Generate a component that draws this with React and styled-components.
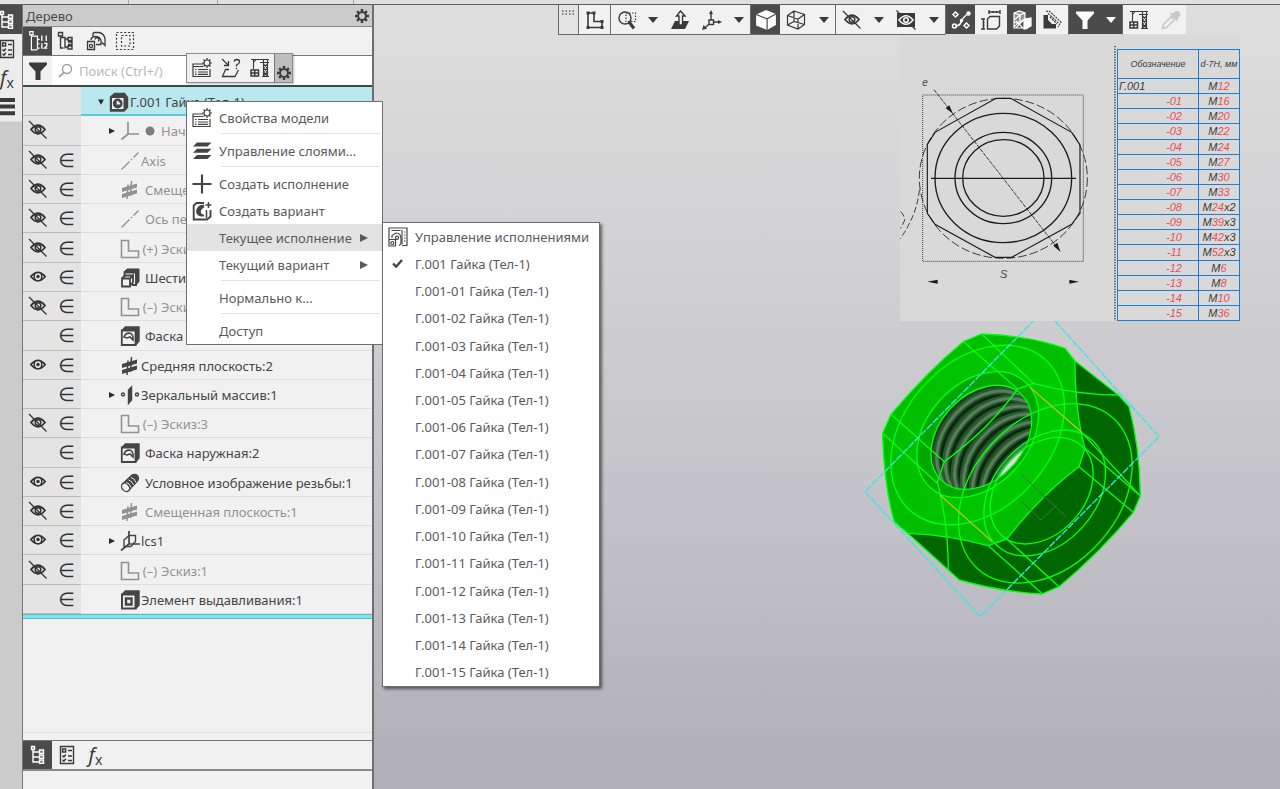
import React from 'react';
import styled, { createGlobalStyle, css } from 'styled-components';

const GlobalStyle = createGlobalStyle`
    *, *::before, *::after {
        box-sizing: border-box;
    }
    body {
        margin: 0;
        font-family: "Noto Sans", "Open Sans", sans-serif;
        font-size: 13px;
        line-height: 18px;
        color: #4a4a4a;
    }
    button, input {
        font: inherit;
        color: inherit;
    }
    ul {
        margin: 0;
        padding: 0;
        list-style: none;
    }
    svg {
        flex: none;
    }
`;

const Page = styled.div`
    position: relative;
    display: flex;
    flex-direction: column;
    min-height: 100vh;
    overflow: hidden;
    background-color: #cbcbcb;
`;

const TopStrip = styled.div`
    display: flex;
    height: 5px;
    background-color: #e0e0e0;
    border-bottom: 1px solid #5c5c5c;
`;

const StripCell = styled.div`
    width: ${(p) => p.$width}px;
    border-right: 1px solid #a8a8a8;
`;

const Workspace = styled.div`
    display: flex;
    flex: 1;
`;

const IconButton = styled.button`
    display: flex;
    flex: none;
    align-items: center;
    justify-content: center;
    width: ${(p) => p.$width || 29}px;
    padding: 0;
    border: 0;
    background-color: ${(p) => (p.$active ? '#4b4b4b' : 'transparent')};
    color: ${(p) => (p.$active ? '#ffffff' : '#3a3a3a')};
    cursor: pointer;
`;

/* left rail */

const Rail = styled.nav`
    flex: none;
    width: 22px;
`;

const RailButtons = styled.div`
    display: flex;
    flex-direction: column;
    background-color: #ececec;
    border-bottom: 1px solid #dcdcdc;
`;

const RailButton = styled(IconButton)`
    width: 22px;
    height: 29px;
    overflow: hidden;
    padding-right: 8px;
`;

/* tree panel */

const Panel = styled.aside`
    display: flex;
    flex: none;
    flex-direction: column;
    width: 352px;
    background-color: #f1f1f1;
    border-left: 1px solid #777777;
    border-right: 2px solid #6e6e73;
`;

const PanelHeader = styled.header`
    display: flex;
    align-items: center;
    justify-content: space-between;
    height: 22px;
    padding-left: 3px;
    background-color: #cbcbcb;
    border-bottom: 1px solid #8a8a8a;
`;

const PanelTitle = styled.h1`
    margin: 0;
    font-size: 13px;
    font-weight: 400;
`;

const PanelTools = styled.div`
    display: flex;
    height: 29px;
    border-bottom: 1px solid #777777;
`;

const SearchRow = styled.div`
    display: flex;
    align-items: stretch;
    height: 31px;
    background-color: #ffffff;
    border-bottom: 2px solid #3c4a4a;
`;

const FilterButton = styled(IconButton)`
    background-color: #f1f1f1;
`;

const SearchLabel = styled.label`
    display: flex;
    flex: 1;
    align-items: center;
    gap: 4px;
    padding-left: 6px;
    color: #9a9a9a;
`;

const SearchInput = styled.input`
    flex: 1;
    min-width: 0;
    border: 0;
    outline: 0;
    background: transparent;
    &::placeholder {
        color: #b8b8b8;
        opacity: 1;
    }
`;

const Tree = styled.ul`
    display: grid;
    grid-auto-rows: 1fr;
    min-height: 527px;
`;

const RowStatus = styled.div`
    display: flex;
    flex: none;
    width: 58px;
    background-color: #e4e4e4;
    border-bottom: 1px solid #bcbcbc;
`;

const RowBody = styled.div`
    display: flex;
    flex: 1;
    align-items: center;
    min-width: 0;
    padding-left: ${(p) => (p.$root ? 12 : 23)}px;
    padding-top: 2px;
    border-bottom: 1px solid #dedede;
    ${(p) => p.$root && css`
        background-color: #b9e8ee;
        border-bottom: 2px solid #5ccadb;
    `}
`;

const TreeRow = styled.li`
    display: flex;
    min-width: 0;
    color: ${(p) => (p.$dim ? '#929292' : '#454545')};
    white-space: nowrap;
`;

const StatusSlot = styled.span`
    display: flex;
    align-items: center;
    justify-content: center;
    width: 29px;
    color: #333333;
`;

const Membership = styled.span`
    font-family: "DejaVu Sans", sans-serif;
    font-size: 19px;
`;

const ExpandSlot = styled.span`
    display: flex;
    justify-content: center;
    width: 16px;
    color: #2b2b2b;
`;

const RowIcon = styled.span`
    display: flex;
    width: 20px;
    justify-content: center;
`;

const RowMark = styled.span`
    display: flex;
    align-items: center;
    justify-content: center;
    width: 20px;
`;

const RowLabel = styled.span`
    padding-left: ${(p) => (p.$tight ? 1 : 5)}px;
`;

const TreeEnd = styled.div`
    height: 5px;
    background-color: #86e3ec;
    border-top: 1px solid #57bccb;
    border-bottom: 1px solid #57bccb;
`;

const PanelSpace = styled.div`
    flex: 1;
    border-bottom: 1px solid #dddddd;
`;

const PanelTabs = styled.div`
    display: flex;
    height: 31px;
    margin-top: 7px;
    margin-bottom: 18px;
    border-top: 1px solid #777777;
    border-bottom: 2px solid #8a8a8a;
`;

const Fx = styled.span`
    font-size: 20px;
    font-style: italic;
    line-height: 22px;
    sub {
        font-size: 14px;
        font-style: normal;
        line-height: 0;
        vertical-align: -3px;
    }
`;

/* model viewport */

const Viewport = styled.main`
    display: flex;
    flex: 1;
    flex-direction: column;
    align-items: flex-end;
    min-width: 0;
    background: linear-gradient(#dedede 0%, #d2d2d4 30%, #c3c2c8 65%, #b0afb9 100%);
`;

const ViewToolbar = styled.div`
    display: flex;
    align-self: stretch;
    height: 30px;
    padding-left: 184px;
`;

const ToolGroup = styled.div`
    display: flex;
    background-color: #f1f1f1;
    border-left: 1px solid #6a6a6a;
    border-bottom: 1px solid ${(p) => (p.$open ? 'transparent' : '#6a6a6a')};
    background-clip: padding-box;
`;

const GripButton = styled(IconButton)`
    align-items: flex-start;
    padding-top: 5px;
    background-color: #e4e4e4;
`;

const Sheet = styled.section`
    display: flex;
    margin-right: 40px;
    background-color: #d9d9d9;
`;

const SizeTable = styled.table`
    width: 123px;
    margin-top: 14px;
    border-collapse: collapse;
    table-layout: fixed;
    font-family: "Liberation Sans Narrow", "Liberation Sans", sans-serif;
    font-size: 11px;
    font-style: italic;
    line-height: 12px;
    color: #3c3c3c;
    th, td {
        height: 15px;
        padding: 0 1px;
        border: 1px solid #1b7fd8;
        font-weight: 400;
        text-align: center;
        white-space: nowrap;
    }
    thead th {
        height: 29px;
        padding: 0;
        font-size: 9px;
    }
`;

const CodeCell = styled.th`
    && {
        padding-right: ${(p) => (p.$variant ? 16 : 1)}px;
        text-align: ${(p) => (p.$variant ? 'right' : 'left')};
        color: ${(p) => (p.$variant ? '#e5505a' : '#3c3c3c')};
    }
`;

const CodeColumn = styled.col`
    width: 81px;
`;

const Accent = styled.span`
    color: #e5505a;
`;

const Model = styled.div`
    display: flex;
    margin-right: 110px;
`;

/* popups over the tree */

const MiniBar = styled.div`
    position: absolute;
    top: 53px;
    left: 186px;
    display: flex;
    height: 30px;
    background-color: #f1f1f1;
    border: 1px solid #8c8c8c;
    box-shadow: 1px 1px 2px rgba(0, 0, 0, 0.25);
`;

const MoreButton = styled(IconButton)`
    align-items: flex-end;
    padding-bottom: 2px;
    background-color: #bdbdbd;
    border-left: 1px solid #777777;
`;

const Menu = styled.ul`
    position: absolute;
    background-color: #ffffff;
    border: 1px solid #6f6f6f;
    box-shadow: 2px 2px 3px rgba(0, 0, 0, 0.55);
`;

const ContextMenu = styled(Menu)`
    top: 101px;
    left: 186px;
    width: 197px;
    padding-top: 2px;
    box-shadow: none;
`;

const SubMenu = styled(Menu)`
    top: -2px;
    left: 100%;
    display: grid;
    grid-auto-rows: 1fr;
    width: 218px;
    min-height: 465px;
`;

const MenuItem = styled.li`
    position: relative;
    height: 27px;
    background-color: ${(p) => (p.$open ? '#e3e3e3' : 'transparent')};
`;

const SubItem = styled.li`
    display: flex;
`;

const MenuButton = styled.button`
    display: flex;
    align-items: center;
    width: 100%;
    height: 100%;
    padding: 0 14px 0 0;
    border: 0;
    background: transparent;
    color: #5a5a5a;
    text-align: left;
    white-space: nowrap;
`;

const MenuIcon = styled.span`
    display: flex;
    flex: none;
    justify-content: center;
    width: 32px;
    padding-right: 3px;
    color: #444444;
`;

const MenuText = styled.span`
    flex: 1;
`;

const Separator = styled.li`
    height: 1px;
    margin: 2px 2px 3px 34px;
    background-color: #e2e2e2;
`;

const Svg = ({ size = 20, children, sw = 1.4 }) => (
    <svg width={size} height={size} viewBox="0 0 20 20" fill="none" stroke="currentColor" strokeWidth={sw} aria-hidden="true">
        {children}
    </svg>
);

const Gear = ({ size = 14 }) => (
    <Svg size={size} sw={2.6}>
        <circle cx="10" cy="10" r="5.6" />
        <path strokeWidth="3.6" d="M10 0v4M10 16v4M0 10h4M16 10h4M3 3l2.800 2.800M14.200 14.200L17 17M3 17l2.800-2.800M14.200 5.800L17 3" />
    </Svg>
);

const TreeIcon = () => (
    <Svg>
        <path d="M5 4v13h9M5 7h8M5 12h8" />
        <path d="M3.5 1.5h3v3h-3zM11.5 5h4v3.4h-4zM11.5 10h4v3.4h-4zM11.5 15h4v3.4h-4z" fill="#777" />
    </Svg>
);

const ListIcon = () => (
    <Svg>
        <path d="M3.5 1.5h13v17h-13z" />
        <path d="M5.6 4h3v3h-3zM11 5.5h4M5.5 10.5l1.4 1.4 2-2.4M11 11h4M5.5 14.8l1.4 1.4 2-2.4M11 15.5h4" strokeWidth="1.5" />
    </Svg>
);

const BarsIcon = () => (
    <Svg sw={4}>
        <path d="M0 3h18M0 9.6h18M0 16.2h18" />
    </Svg>
);

const NumberedTree = () => (
    <Svg size={22} sw={1.1}>
        <path d="M4 4v14h5M4 5.500h5.500v12.500M9.5 8.500h2M9.500 12.500h2M9.5 16.500h2" />
        <path d="M2.5 1.5h3v3h-3z" />
        <path d="M13.5 5v5M17.500 5v5M13.500 12v5M15.500 12.200h2.500v2l-2.200 2.300h2.700" strokeWidth="1.200" />
    </Svg>
);

const BranchTree = () => (
    <Svg size={20}>
        <path d="M3.500 5v12h3M3.500 6.500H8v11M8 8h3M8 16h3" />
        <path d="M1.500 1.500h4v3.500h-4zM11 6.500h4v3h-4zM11 11h4v2.500h-4M11 15h4v3h-4z" />
    </Svg>
);

const StackIcon = () => (
    <Svg size={20} sw={1.3}>
        <path d="M7 6V3q0-1.500 2-1.500h4q5 1 6 6v7l-3-3M5 9q0-3 4-3.500 5 0 6 4v4h-5" />
        <path d="M9 8.500a2 2 0 1 1 3 2" />
        <path d="M1.500 10.500h7v8h-7z" />
        <circle cx="5" cy="15" r="1.600" />
    </Svg>
);

const SelectIcon = () => (
    <Svg size={20} sw={1.2}>
        <path d="M1.500 1.500h17v17h-17zM6.500 4.500h8.500v10.500H6.500z" strokeDasharray="2 1.800" />
    </Svg>
);

const Funnel = ({ size = 20 }) => (
    <Svg size={size}>
        <path d="M1 1.500h18v2l-6.500 7v8.500h-5v-8.500L1 3.500z" fill="currentColor" stroke="none" />
    </Svg>
);

const SearchIcon = () => (
    <Svg size={15} sw={1.8}>
        <circle cx="12" cy="8" r="6" />
        <path d="M8 12.500l-6.500 6" strokeWidth="2.400" />
    </Svg>
);

const Eye = () => (
    <Svg size={18} sw={1.9}>
        <path d="M2 9.500q8-9.500 16 0-8 9.500-16 0z" />
        <path d="M7 5.500q-2.500 4 0 8M13 5.500q2.500 4 0 8" strokeWidth="1.600" />
        <circle cx="10" cy="9.500" r="1.900" fill="currentColor" stroke="none" />
    </Svg>
);

const EyeOff = () => (
    <Svg size={20} sw={1.8}>
        <path d="M3 9.500q7-8.500 14 0-7 8.500-14 0z" />
        <circle cx="10" cy="9.500" r="2.800" strokeWidth="1.500" />
        <path d="M1 1l17.500 17.500" strokeWidth="1.300" />
    </Svg>
);

const Caret = () => (
    <svg width="10" height="6" viewBox="0 0 10 6" aria-hidden="true"><path d="M0 0h10L5 6z" fill="currentColor" /></svg>
);

const Arrow = ({ size = 6 }) => (
    <svg width={size} height={size} viewBox="0 0 8 8" aria-hidden="true"><path d="M0 0l8 4-8 4z" fill="currentColor" /></svg>
);

const ArrowDown = () => (
    <svg width="6" height="6" viewBox="0 0 8 7" aria-hidden="true"><path d="M0 0h8L4 7z" fill="currentColor" /></svg>
);

const PartIcon = () => (
    <Svg>
        <path d="M1.500 5l4-3.500h10l3 4v10l-3.500 3.500h-13.500z" fill="currentColor" />
        <path d="M3 6h11.500v11H3z" fill="#e8f6f8" stroke="none" />
        <circle cx="8.700" cy="11.500" r="4.200" fill="currentColor" />
        <path d="M8.700 9v2.500h2.500" stroke="#e8f6f8" strokeWidth="2" />
    </Svg>
);

const OriginIcon = () => (
    <Svg><path d="M8 1v12h11M8 13l-6.500 5.500" strokeWidth="1.700" /></Svg>
);

const DotMark = () => (
    <svg width="10" height="10" aria-hidden="true"><circle cx="5" cy="5" r="4.500" fill="#7d7d7d" /></svg>
);

const AxisIcon = () => (
    <Svg><path d="M1.500 18.500l8-8M11 9l1-1M13.500 6.500l5-5" /></Svg>
);

const PlaneIcon = () => (
    <Svg>
        <path d="M2 8l15-4.500v4L2 12zM2 14l15-4.500v4L2 18z" fill="currentColor" stroke="none" />
        <path d="M7 19l1-14.500M10.500 16l1-15" strokeWidth="1.500" />
    </Svg>
);

const SketchIcon = () => (
    <Svg><path d="M1.500 1.500h7v10.500h10v6.500h-17z" strokeWidth="1.600" /></Svg>
);

const HexIcon = () => (
    <Svg sw={1.8}>
        <path d="M4 4l3-3h12v12.500L16 17V4z" fill="currentColor" strokeWidth="1" />
        <path d="M4.500 9V4.500h11.500v12.500h-4" />
        <path d="M2 10.500h8V18.500H2zM10 10.500l3-3v7l-3 3M2 10.500L5 7.500h8" />
    </Svg>
);

const ChamferIcon = () => (
    <Svg>
        <path d="M2 4.500L5.500 1H19v14l-3.500 4" fill="currentColor" />
        <path d="M1.800 4.500h13.700V19H1.800z" fill="#f1f1f1" strokeWidth="1.800" />
        <path d="M4 11q2-5 7-3.500 2.500 2 2 6.500l-3-3-3 1z" strokeWidth="1.600" />
    </Svg>
);

const MirrorIcon = () => (
    <Svg>
        <path d="M8.500 5L11.500 2v13l-3 3.500z" fill="currentColor" />
        <circle cx="3" cy="9.500" r="1.500" />
        <circle cx="17" cy="9.500" r="1.500" />
    </Svg>
);

const ThreadIcon = () => (
    <Svg>
        <path d="M2.500 11L12 2q5-2 6.500 3 0 2-1.500 3.500L9 17z" fill="currentColor" />
        <ellipse cx="5.600" cy="14.300" rx="4.600" ry="3.600" transform="rotate(50 5.600 14.300)" fill="#f1f1f1" />
        <path d="M6 9.500q4 .5 5 5M8.500 7q4 1 5 5M11 4.500q4 1 5 5" stroke="#f1f1f1" strokeWidth=".9" />
    </Svg>
);

const LcsIcon = () => (
    <Svg>
        <path d="M9 0v13h11M9 13l-8 6.500" strokeWidth="1.700" />
        <path d="M4 15V9l5-4.500h6.500v6L11 15.500H4z" />
    </Svg>
);

const ExtrudeIcon = () => (
    <Svg>
        <path d="M2 4.500L5.500 1H19v14l-3.500 4" fill="currentColor" />
        <path d="M2 4.500h13.500V18.500H2z" fill="#f1f1f1" strokeWidth="2" />
        <path d="M6 8.500h5.500v6H6z" strokeWidth="2.400" />
    </Svg>
);

const PropertiesIcon = () => (
    <Svg sw={1.2}>
        <path d="M11 6H1v12.500h17V11M1 8.500h10M3 11.500h1.500M6 11.500h10M3 14h1.500M6 14h10M3 16.300h1.500M6 16.300h10" />
        <circle cx="15" cy="5" r="3" />
        <path d="M15 0v2M15 8v2M10 5h2M18 5h2M11.500 1.500L13 3M17 7l1.500 1.500M11.500 8.500L13 7M17 3l1.500-1.500" />
    </Svg>
);

const QueryIcon = () => (
    <Svg sw={1.3}>
        <path d="M1 1l6.500 6.500M7.500 3v4.500H3M4.500 11.500L1.500 18.500h12.500l3.500-6.500M4 11.500h4" />
        <path d="M13 3.500q.5-2 3-2t2.500 2.500q0 1.500-3 3v1.500M15.500 9.800v1.500" />
    </Svg>
);

const CraneIcon = () => (
    <Svg sw={1.1}>
        <path d="M1 1.500h18M3.500 2v9M10 4.500h9M3.500 4.500L6 1.500" />
        <path d="M13.500 2v16.500M17.500 2v16.500M12 18.500h7M13.500 6l4 4-4 4 4 4M17.500 6l-4 4 4 4-4 4" />
        <path d="M1 12h7.500v6H1zM1 15h7.500M4.700 12v6" strokeWidth="1.500" />
    </Svg>
);

const LayersIcon = () => (
    <Svg>
        <path d="M5 1.500h14.500l-4 4H1zM5 7.700h14.500l-4 4H1zM5 14h14.500l-4 4H1z" fill="currentColor" stroke="none" />
    </Svg>
);

const PlusIcon = () => (
    <Svg sw={2.2}><path d="M10 .5v19M.5 10h19" /></Svg>
);

const VariantIcon = () => (
    <Svg>
        <path d="M12 2H4.500L1.700 4.500v14H15l3.500-3V9" strokeWidth="1.900" />
        <path d="M11.500 4.500L8 5Q4 8 5 12q2.500 4 7 2.500-3.500-.5-4-3.500 0-3 3.500-5z" fill="currentColor" />
        <path d="M14.500 9v8M16.500 1v6M13.500 4h6" strokeWidth="1.500" />
    </Svg>
);

const ConfigIcon = () => (
    <Svg sw={1.2}>
        <path d="M1 12V1h18v17.500h-5M3.500 3.500h9M14 3v14M16 5h1.500M16 8h1.500M16 11h1.500M16 14h1.500" />
        <path d="M4 11V8.500l4-2.500q5 0 5 6v5l-2 1.500M1 12.500h6.500v6.500H1z" />
        <circle cx="4.300" cy="16" r="1.500" />
        <circle cx="9" cy="10.800" r="1.600" />
    </Svg>
);

const CheckIcon = () => (
    <svg width="11" height="9" viewBox="0 0 12 10" aria-hidden="true"><path d="M1 5l3.500 3.500L11 1" fill="none" stroke="currentColor" strokeWidth="2.600" /></svg>
);

const GripIcon = () => (
    <svg width="13" height="6" aria-hidden="true">
        <path d="M0 1h13M0 4h13" stroke="#666" strokeWidth="1.500" strokeDasharray="1.500 2" />
    </svg>
);

const NodeSketchIcon = () => (
    <Svg sw={1.6}>
        <path d="M3 3h6v8.500h8v6H3z" />
        <path d="M1.500 1.500h3v3h-3zM7.500 1.500h3v3h-3zM15.500 10h3v3h-3zM1.500 16h3v3h-3zM15.500 16h3v3h-3z" fill="currentColor" stroke="none" />
    </Svg>
);

const ZoomAreaIcon = () => (
    <Svg>
        <circle cx="8" cy="8" r="6" />
        <path d="M12 12l5 6.500" strokeWidth="3" />
        <path d="M9 3h9.500v8.500H9z" strokeDasharray="1.500 1.500" strokeWidth="1.200" />
    </Svg>
);

const RaiseIcon = () => (
    <Svg>
        <path d="M5 11h14l-4 8H1z" fill="currentColor" stroke="none" />
        <path d="M10.500 1L6.500 6H9v9h3.500V6h2.500z" fill="#f1f1f1" />
    </Svg>
);

const TriadIcon = () => (
    <Svg>
        <path d="M9 3v7M12 12h5M7 14l-4 4M7 10h4.500v4.500H7z" />
        <path d="M9 0l2 4H7zM20 12l-4 2v-4zM0 20l1.500-5 3.500 3.500z" fill="currentColor" stroke="none" />
    </Svg>
);

const CubeIcon = () => (
    <Svg size={22}>
        <path d="M10 1l9 3.500v10L11 19 1 15V5z" fill="currentColor" stroke="none" />
        <path d="M1 5l10 4 8-4.500M11 9v10" stroke="#4b4b4b" strokeWidth="1.100" />
    </Svg>
);

const WireCubeIcon = () => (
    <Svg sw={1.2}>
        <path d="M8 1l10.500 3.500v10L12 19 1.500 15V5.500zM1.500 5.500L12 9l6.500-4.500M12 9v10M8 1v10.500M1.500 15L8 11.500l10.500 3" />
    </Svg>
);

const EyeBoxIcon = () => (
    <Svg>
        <path d="M1 3h18v14H1z" fill="currentColor" stroke="none" />
        <path d="M3 10q7-8.500 14 0-7 8.500-14 0z" stroke="#f1f1f1" strokeWidth="1.600" />
        <circle cx="10" cy="10" r="2.300" stroke="#f1f1f1" strokeWidth="1.600" />
        <path d="M.5 .5L4 4M16 16l3.500 3.500" />
    </Svg>
);

const ConstraintIcon = () => (
    <Svg sw={1.5}>
        <path d="M4 16q5 0 6-4t8-9" />
        <path d="M4.500 2l2.500 2.500L4.500 7 2 4.500zM15.500 13l2.500 2.500-2.500 2.500-2.500-2.500z" />
        <circle cx="3.500" cy="16" r="2" />
        <circle cx="17.500" cy="3.500" r="1.500" />
        <circle cx="10.500" cy="10.500" r="1" />
    </Svg>
);

const DimensionIcon = () => (
    <Svg sw={1.4}>
        <path d="M6.500 9L9 6.500h9.500v9.500L15.500 19H6.500zM8 0v4M19 0v4M8 2h11M12 1v2M15.500 1v2M0 9h4M0 19h4M2.500 9v10M1.500 12.500h2M1.500 15.500h2" />
    </Svg>
);

const PrismIcon = () => (
    <Svg sw={1.2}>
        <path d="M2 3l5-2 6 2v6l-6 5-5-2z" fill="currentColor" fillOpacity=".4" />
        <path d="M2 3l6 2v6l-6 6M8 5l5-2M2 10l6-5M2 12v6h10M4 18l7-8M4 11l7 7M8 11h3" />
        <path d="M12 9l7-1v8l-5 3h-2z" fill="currentColor" />
    </Svg>
);

const CornerIcon = () => (
    <Svg>
        <path d="M4 1.500l3-.5 12 11-3 5M6 3.500l11 10M8 7l7 7" strokeWidth="1.200" strokeDasharray="2 1" />
        <path d="M1.500 5v13.500h12.500v-4.500h-4L6 10V5z" fill="currentColor" stroke="none" />
    </Svg>
);

const DropperIcon = () => (
    <Svg sw={1.6}>
        <path d="M1.500 18.500l1-4 8-8 3 3-8 8z" />
        <path d="M10 4l6 6 .5-2.500 2-2.500q.5-3-3-3.500l-2.500 2z" fill="currentColor" />
    </Svg>
);

const FxIcon = () => <Fx>f<sub>x</sub></Fx>;

const rows = [
    { label: 'Начало', icon: <OriginIcon />, mark: <DotMark />, eye: 'off', dim: true, arrow: true, free: true, tight: true },
    { label: 'Axis', icon: <AxisIcon />, eye: 'off', dim: true, tight: true },
    { label: 'Смещенная', icon: <PlaneIcon />, eye: 'off', dim: true },
    { label: 'Ось первая', icon: <AxisIcon />, eye: 'off', dim: true },
    { label: 'Эскиз:4', icon: <SketchIcon />, mark: '(+)', eye: 'off', dim: true, tight: true },
    { label: 'Шестигран', icon: <HexIcon />, eye: 'on' },
    { label: 'Эскиз:2', icon: <SketchIcon />, mark: '(–)', eye: 'off', dim: true, tight: true },
    { label: 'Фаска наружная:1', icon: <ChamferIcon /> },
    { label: 'Средняя плоскость:2', icon: <PlaneIcon />, eye: 'on', tight: true },
    { label: 'Зеркальный массив:1', icon: <MirrorIcon />, arrow: true, tight: true },
    { label: 'Эскиз:3', icon: <SketchIcon />, mark: '(–)', eye: 'off', dim: true, tight: true },
    { label: 'Фаска наружная:2', icon: <ChamferIcon /> },
    { label: 'Условное изображение резьбы:1', icon: <ThreadIcon />, eye: 'on' },
    { label: 'Смещенная плоскость:1', icon: <PlaneIcon />, eye: 'off', dim: true },
    { label: 'lcs1', icon: <LcsIcon />, eye: 'on', arrow: true, tight: true },
    { label: 'Эскиз:1', icon: <SketchIcon />, mark: '(–)', eye: 'off', dim: true, tight: true },
    { label: 'Элемент выдавливания:1', icon: <ExtrudeIcon />, tight: true },
];

// [value, suffix] for each execution, starting from the base one
const sizes = [
    ['12'], ['16'], ['20'], ['22'], ['24'], ['27'], ['30'], ['33'],
    ['24', 'x2'], ['39', 'x3'], ['42', 'x3'], ['52', 'x3'], ['6'], ['8'], ['10'], ['36'],
];

const suffix = (i) => (i === 0 ? '' : `-${String(i).padStart(2, '0')}`);

const ModelTree = () => (
    <Tree>
        <TreeRow>
            <RowStatus />
            <RowBody $root>
                <ExpandSlot><ArrowDown /></ExpandSlot>
                <RowIcon><PartIcon /></RowIcon>
                <RowLabel $tight>Г.001 Гайка (Тел-1)</RowLabel>
            </RowBody>
        </TreeRow>
        {rows.map((row) => (
            <TreeRow key={row.label} $dim={row.dim}>
                <RowStatus>
                    <StatusSlot>
                        {row.eye === 'on' && <Eye />}
                        {row.eye === 'off' && <EyeOff />}
                    </StatusSlot>
                    <StatusSlot>{!row.free && <Membership>∈</Membership>}</StatusSlot>
                </RowStatus>
                <RowBody>
                    <ExpandSlot>{row.arrow && <Arrow />}</ExpandSlot>
                    <RowIcon>{row.icon}</RowIcon>
                    {row.mark && <RowMark>{row.mark}</RowMark>}
                    <RowLabel $tight={row.tight}>{row.label}</RowLabel>
                </RowBody>
            </TreeRow>
        ))}
    </Tree>
);

const Executions = () => (
    <SubMenu>
        <SubItem>
            <MenuButton>
                <MenuIcon><ConfigIcon /></MenuIcon>
                <MenuText>Управление исполнениями</MenuText>
            </MenuButton>
        </SubItem>
        {sizes.map((size, i) => (
            <SubItem key={suffix(i)}>
                <MenuButton>
                    <MenuIcon>{i === 0 && <CheckIcon />}</MenuIcon>
                    <MenuText>{`Г.001${suffix(i)} Гайка (Тел-1)`}</MenuText>
                </MenuButton>
            </SubItem>
        ))}
    </SubMenu>
);

const Item = ({ icon, text, arrow, open, children }) => (
    <MenuItem $open={open}>
        <MenuButton>
            <MenuIcon>{icon}</MenuIcon>
            <MenuText>{text}</MenuText>
            {arrow && <Arrow size={8} />}
        </MenuButton>
        {children}
    </MenuItem>
);

const TreeContextMenu = () => (
    <ContextMenu>
        <Item icon={<PropertiesIcon />} text="Свойства модели" />
        <Separator />
        <Item icon={<LayersIcon />} text="Управление слоями..." />
        <Separator />
        <Item icon={<PlusIcon />} text="Создать исполнение" />
        <Item icon={<VariantIcon />} text="Создать вариант" />
        <Item text="Текущее исполнение" arrow open>
            <Executions />
        </Item>
        <Item text="Текущий вариант" arrow />
        <Separator />
        <Item text="Нормально к..." />
        <Separator />
        <Item text="Доступ" />
    </ContextMenu>
);

const Faded = styled.span`
    display: flex;
    color: #c9c9c9;
`;

const Toolbar = () => (
    <ViewToolbar>
        <ToolGroup><GripButton $width={19} aria-label="Панель"><GripIcon /></GripButton></ToolGroup>
        <ToolGroup><IconButton $width={31} aria-label="Эскиз"><NodeSketchIcon /></IconButton></ToolGroup>
        <ToolGroup>
            <IconButton $width={31} aria-label="Масштаб"><ZoomAreaIcon /></IconButton>
            <IconButton $width={22} aria-label="Варианты масштаба"><Caret /></IconButton>
            <IconButton $width={32} aria-label="Нормально к"><RaiseIcon /></IconButton>
            <IconButton $width={31} aria-label="Ориентация"><TriadIcon /></IconButton>
            <IconButton $width={23} aria-label="Варианты ориентации"><Caret /></IconButton>
        </ToolGroup>
        <ToolGroup>
            <IconButton $active aria-label="Полутоновое"><CubeIcon /></IconButton>
            <IconButton $width={32} aria-label="Каркас"><WireCubeIcon /></IconButton>
            <IconButton $width={23} aria-label="Варианты каркаса"><Caret /></IconButton>
        </ToolGroup>
        <ToolGroup>
            <IconButton $width={32} aria-label="Скрыть"><EyeOff /></IconButton>
            <IconButton $width={22} aria-label="Варианты скрытия"><Caret /></IconButton>
            <IconButton $width={32} aria-label="Скрыть фон"><EyeBoxIcon /></IconButton>
            <IconButton $width={23} aria-label="Варианты фона"><Caret /></IconButton>
        </ToolGroup>
        <ToolGroup $open>
            <IconButton $active aria-label="Ограничения"><ConstraintIcon /></IconButton>
            <IconButton $width={32} aria-label="Размеры"><DimensionIcon /></IconButton>
            <IconButton $active aria-label="Сечение"><PrismIcon /></IconButton>
            <IconButton $width={32} aria-label="Угол"><CornerIcon /></IconButton>
        </ToolGroup>
        <ToolGroup $open>
            <IconButton $active $width={31} aria-label="Фильтр"><Funnel /></IconButton>
            <IconButton $active $width={22} aria-label="Варианты фильтра"><Caret /></IconButton>
        </ToolGroup>
        <ToolGroup $open>
            <IconButton $width={32} aria-label="Сборка"><CraneIcon /></IconButton>
            <IconButton $width={31} disabled aria-label="Пипетка"><Faded><DropperIcon /></Faded></IconButton>
        </ToolGroup>
    </ViewToolbar>
);

const Drawing = () => (
    <svg width="217" height="286" viewBox="15 0 651 858" fill="none" stroke="#1c1c1c" strokeWidth="3.500">
        <path d="M83 180H565V679H83z" strokeWidth="2.500" strokeDasharray="3 3" />
        <path d="M660 33V858" strokeWidth="3.500" strokeDasharray="4 4" />
        <ellipse cx="325" cy="430" rx="252" ry="240" strokeWidth="2.500" strokeDasharray="26 9" />
        <path d="M303 190h44L530 292l25 38v205l-25 33L350 667h-50L120 568 97 535V328l23-36z" />
        <ellipse cx="325" cy="429" rx="205" ry="194" strokeWidth="4" />
        <ellipse cx="325" cy="429" rx="145" ry="137" strokeWidth="4" />
        <ellipse cx="325" cy="429" rx="122" ry="115" strokeWidth="4" />
        <path d="M108 430H543" />
        <path d="M117 164L496 650" strokeWidth="2.500" strokeDasharray="12 3" />
        <path d="M73 465Q66 540 15 612M17 530q10 8 12 26l-12 24" strokeWidth="2.500" strokeDasharray="18 8" />
        <g fill="#1c1c1c" stroke="none">
            <path d="M174 236l-22-16 11-9zM496 650l-21-18 12-9zM97 740l31-6v12zM552 740l-29-6v12z" />
            <g fontFamily="Liberation Sans, sans-serif" fontStyle="italic" fill="#444">
                <text x="82" y="153" fontSize="30">e</text>
                <text x="315" y="728" fontSize="33">S</text>
            </g>
        </g>
    </svg>
);

const tilt = (x, y) => `translate(${x} ${y}) rotate(-48)`;

const Nut = () => (
    <svg width="315" height="304" viewBox="0 18 945 912" fill="none" strokeLinejoin="round">
        <defs>
            <clipPath id="hole"><ellipse rx="176" ry="127" transform={tilt(379, 367)} /></clipPath>
            <linearGradient id="face" x1="0" y1="0" x2="1" y2="1">
                <stop offset="0" stopColor="#00bd00" />
                <stop offset="1" stopColor="#00cc00" />
            </linearGradient>
        </defs>
        <path
            d="M380 57C470 60 560 75 630 100L660 138 790 240 822 275C845 360 855 450 856 543L835 592C770 670 690 750 612 815L560 837C470 832 390 817 313 795L280 765 158 655 118 620C95 540 85 450 83 355L108 298C170 225 240 150 325 80z"
            fill="#006600"
        />
        <path
            d="M380 57C470 60 560 75 630 100L660 138C660 250 670 330 690 400L672 455C590 515 520 590 455 672L400 692C320 670 240 658 158 655L118 620C95 540 85 450 83 355L108 298C170 225 240 150 325 80z"
            fill="#00bd00"
        />
        <ellipse rx="304" ry="219" transform={tilt(368, 360)} fill="url(#face)" />
        <ellipse rx="213" ry="153" transform={tilt(368, 359)} fill="#00a800" />
        <g clipPath="url(#hole)">
            <path d="M200 190H560V550H200z" fill="#123a16" />
            {[0, 1, 2, 3, 4, 5, 6].map((i) => (
                <g key={i} transform={tilt(392 + i * 27, 380 + i * 23)}>
                    <ellipse rx="176" ry="127" fill="#1a451d" />
                    <ellipse rx="174" ry="125" stroke="#2c5a30" strokeWidth="20" />
                    <ellipse rx="172" ry="123" stroke="#587f5b" strokeWidth="9" />
                    <ellipse rx="157" ry="108" stroke="#0b250e" strokeWidth="7" />
                </g>
            ))}
            <ellipse rx="180" ry="130" transform={tilt(560, 527)} fill="#dcdce0" />
        </g>
        <g stroke="#00ff10" strokeWidth="4">
            <path d="M380 57C470 60 560 75 630 100L660 138 790 240 822 275C845 360 855 450 856 543L835 592C770 670 690 750 612 815L560 837C470 832 390 817 313 795L280 765 158 655 118 620C95 540 85 450 83 355L108 298C170 225 240 150 325 80z" />
            <path d="M660 138C660 250 670 330 690 400L672 455C590 515 520 590 455 672L400 692C320 670 240 658 158 655" />
            <ellipse rx="304" ry="219" transform={tilt(368, 360)} />
            <ellipse rx="213" ry="153" transform={tilt(368, 359)} />
            <ellipse rx="176" ry="127" transform={tilt(379, 367)} />
            <ellipse rx="304" ry="219" transform={tilt(571, 535)} />
            <ellipse rx="213" ry="153" transform={tilt(569, 534)} />
            <ellipse rx="180" ry="130" transform={tilt(560, 527)} />
            <path d="M325 80L488 222 535 205C620 228 700 240 790 240M380 57L535 205M488 222C425 310 350 380 268 440L108 298M268 440L247 500C270 590 280 680 280 765M83 355L247 505" />
            <path d="M680 352L856 543M690 400L856 543M672 455L835 592M455 672L612 815M400 692L560 835" />
        </g>
        <path d="M525 217L680 352M255 540L412 680" stroke="#b9c414" strokeWidth="4" />
        <path d="M600 18L912 365 375 905 30 530 535 18" stroke="#3fe3e6" strokeWidth="4" strokeDasharray="22 4" />
        <path d="M500 480L635 607M500 560L558 615 605 570" stroke="#4d6b4d" strokeWidth="3" />
    </svg>
);

const ExecutionTable = () => (
    <SizeTable>
        <colgroup>
            <CodeColumn />
            <col />
        </colgroup>
        <thead>
            <tr>
                <th scope="col">Обозначение</th>
                <th scope="col">d-7H, мм</th>
            </tr>
        </thead>
        <tbody>
            {sizes.map(([value, pitch], i) => (
                <tr key={suffix(i)}>
                    <CodeCell scope="row" $variant={i > 0}>{i === 0 ? 'Г.001' : suffix(i)}</CodeCell>
                    <td>М<Accent>{value}</Accent>{pitch}</td>
                </tr>
            ))}
        </tbody>
    </SizeTable>
);

const App = () => (
    <React.Fragment>
        <GlobalStyle />
        <Page>
            <TopStrip>
                <StripCell $width={129} />
                <StripCell $width={89} />
                <StripCell $width={136} />
            </TopStrip>
            <Workspace>
                <Rail>
                    <RailButtons>
                        <RailButton $active aria-label="Дерево"><TreeIcon /></RailButton>
                        <RailButton aria-label="Параметры"><ListIcon /></RailButton>
                        <RailButton aria-label="Переменные"><FxIcon /></RailButton>
                        <RailButton aria-label="Слои"><BarsIcon /></RailButton>
                    </RailButtons>
                </Rail>
                <Panel>
                    <PanelHeader>
                        <PanelTitle>Дерево</PanelTitle>
                        <IconButton $width={20} aria-label="Настройка"><Gear /></IconButton>
                    </PanelHeader>
                    <PanelTools>
                        <IconButton $active aria-label="Последовательность"><NumberedTree /></IconButton>
                        <IconButton aria-label="Структура"><BranchTree /></IconButton>
                        <IconButton aria-label="Исполнения"><StackIcon /></IconButton>
                        <IconButton aria-label="Область"><SelectIcon /></IconButton>
                    </PanelTools>
                    <SearchRow>
                        <FilterButton aria-label="Фильтр дерева"><Funnel /></FilterButton>
                        <SearchLabel>
                            <SearchIcon />
                            <SearchInput type="text" placeholder="Поиск (Ctrl+/)" aria-label="Поиск" />
                        </SearchLabel>
                    </SearchRow>
                    <ModelTree />
                    <TreeEnd />
                    <PanelSpace />
                    <PanelTabs>
                        <IconButton $active aria-label="Дерево модели"><TreeIcon /></IconButton>
                        <IconButton aria-label="Параметры модели"><ListIcon /></IconButton>
                        <IconButton aria-label="Переменные модели"><FxIcon /></IconButton>
                    </PanelTabs>
                </Panel>
                <Viewport>
                    <Toolbar />
                    <Sheet>
                        <Drawing />
                        <ExecutionTable />
                    </Sheet>
                    <Model><Nut /></Model>
                </Viewport>
            </Workspace>
            <MiniBar>
                <IconButton aria-label="Свойства"><PropertiesIcon /></IconButton>
                <IconButton aria-label="Запрос"><QueryIcon /></IconButton>
                <IconButton aria-label="Сборка модели"><CraneIcon /></IconButton>
                <MoreButton $width={18} aria-label="Настроить панель"><Gear /></MoreButton>
            </MiniBar>
            <TreeContextMenu />
        </Page>
    </React.Fragment>
);

export default App;
